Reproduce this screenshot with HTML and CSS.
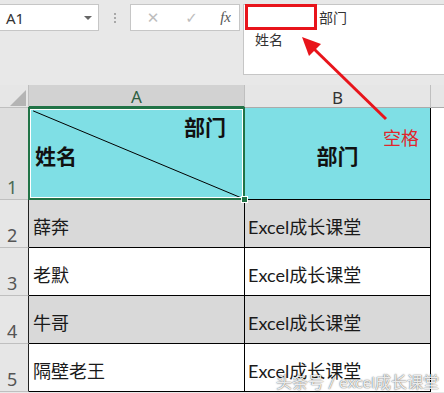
FILE: index.html
```html
<!DOCTYPE html>
<html lang="zh">
<head>
<meta charset="utf-8">
<title>Excel</title>
<link rel="stylesheet" href="styles.css">
</head>
<body>
<div class="toolbar">
  <div class="tools">
    <div class="namebox"><span>A1</span><span class="drop"></span></div>
    <div class="dots"><span></span><span></span><span></span></div>
    <div class="fxbox"><span class="btn">✕</span><span class="btn">✓</span><span class="fx">fx</span></div>
  </div>
  <div class="formula">
    <div class="fline"><span class="redbox"></span><span>部门</span></div>
    <div class="fline2">姓名</div>
  </div>
</div>
<div class="sheet">
  <div class="corner"><span class="tri"></span></div>
  <div class="colhead sel-col">A</div>
  <div class="colhead">B</div>
  <div class="colhead rest"></div>

  <div class="rowhead r1">1</div>
  <div class="cell a1 cyan">
    <svg class="diag" preserveAspectRatio="none" viewBox="0 0 100 100"><line x1="1" y1="1" x2="100" y2="100" stroke="#000" stroke-width="1" vector-effect="non-scaling-stroke"/></svg>
    <span class="a1-top">部门</span>
    <span class="a1-left">姓名</span>
    <span class="sel"></span><span class="handle"></span>
  </div>
  <div class="cell b1 cyan">部门</div>
  <div class="blank"></div>

  <div class="rowhead">2</div>
  <div class="cell a gray">薛奔</div>
  <div class="cell b gray">Excel成长课堂</div>
  <div class="blank"></div>

  <div class="rowhead">3</div>
  <div class="cell a">老默</div>
  <div class="cell b">Excel成长课堂</div>
  <div class="blank"></div>

  <div class="rowhead">4</div>
  <div class="cell a gray">牛哥</div>
  <div class="cell b gray">Excel成长课堂</div>
  <div class="blank"></div>

  <div class="rowhead">5</div>
  <div class="cell a">隔壁老王</div>
  <div class="cell b">Excel成长课堂</div>
  <div class="blank"></div>
</div>
<svg class="arrow" width="444" height="393" viewBox="0 0 444 393">
  <line x1="386" y1="119" x2="312" y2="47" stroke="#e8141b" stroke-width="3"/>
  <polygon points="302,37 309,56 321,44" fill="#e8141b"/>
</svg>
<div class="note">空格</div>
<div class="watermark">头条号 / excel成长课堂</div>
</body>
</html>
```

FILE: styles.css
```css
* { box-sizing: border-box; }
html, body { margin: 0; padding: 0; }
body {
  width: 444px;
  height: 393px;
  overflow: hidden;
  position: relative;
  background: #e8e8e8;
  font-family: "Lato", "Noto Sans CJK SC", sans-serif;
  color: #1a1a1a;
}
.toolbar {
  height: 85px;
  display: flex;
  align-items: flex-start;
}
.tools {
  width: 243px;
  display: flex;
  align-items: center;
  padding-top: 4px;
}
.namebox {
  width: 99px;
  height: 27px;
  background: #fff;
  border: 1px solid #c6c6c6;
  border-left: none;
  display: flex;
  align-items: center;
  justify-content: space-between;
  padding: 0 6px 0 6px;
  font-size: 15px;
  color: #333;
  font-family: "Noto Sans", sans-serif;
}
.drop {
  width: 0; height: 0;
  border-left: 4px solid transparent;
  border-right: 4px solid transparent;
  border-top: 4px solid #666;
}
.dots {
  width: 31px;
  display: flex;
  flex-direction: column;
  align-items: center;
  gap: 2px;
}
.dots span { width: 2px; height: 2px; background: #a8a8a8; }
.fxbox {
  width: 110px;
  height: 27px;
  background: #fff;
  border: 1px solid #c6c6c6;
  display: flex;
  align-items: center;
  padding: 0 8px 0 12px;
  justify-content: space-between;
}
.btn { color: #bdbdbd; font-size: 15px; width: 20px; text-align: center; font-family: "DejaVu Sans", sans-serif; }
.fx { font-family: "Liberation Serif", serif; font-style: italic; font-size: 15px; color: #555; }
.formula {
  flex: 1;
  margin-top: 4px;
  height: 71px;
  background: #fff;
  border: 1px solid #c6c6c6;
  border-right: none;
  font-size: 14px;
  color: #333;
}
.fline { display: flex; align-items: center; margin-top: -1px; gap: 2px; }
.redbox {
  width: 72px;
  height: 26px;
  border: 3px solid #e8141b;
  margin-left: 1px;
}
.fline2 { padding-left: 11px; margin-top: 1px; line-height: 18px; }
.sheet {
  display: grid;
  grid-template-columns: 29px 216px 186px 1fr;
  grid-template-rows: 23px 92px repeat(4, 48px);
}
.corner {
  background: #e6e6e6;
  border-right: 1px solid #bfbfbf;
  border-bottom: 1px solid #bfbfbf;
  display: flex;
  align-items: flex-end;
  justify-content: flex-end;
  padding: 0 2px 1px 0;
}
.tri {
  width: 16px; height: 16px;
  background: #b4b4b4;
  clip-path: polygon(100% 0, 100% 100%, 0 100%);
}
.colhead {
  background: #e6e6e6;
  border-right: 1px solid #bfbfbf;
  border-bottom: 1px solid #ababab;
  display: flex;
  align-items: center;
  justify-content: center;
  font-family: "Noto Sans", sans-serif;
  font-size: 17px;
  color: #333;
  padding-top: 2px;
}
.colhead.sel-col {
  background: #d2d2d2;
  border-bottom: 2px solid #217346;
  color: #2e5f41;
}
.colhead.rest { border-right: none; }
.rowhead {
  background: #e6e6e6;
  border-right: 1px solid #222;
  border-bottom: 1px solid #bfbfbf;
  display: flex;
  align-items: flex-end;
  padding: 0 0 1px 7px;
  font-family: "Noto Sans", sans-serif;
  font-size: 18px;
  line-height: 1.1;
  color: #555;
}
.rowhead.r1 { background: #dedede; color: #4a6a55; }
.cell {
  border-right: 1px solid #000;
  border-bottom: 1px solid #000;
  background: #fff;
  font-size: 18px;
  display: flex;
  align-items: center;
  padding-top: 4px;
}
.cell.gray { background: #d9d9d9; }
.cell.cyan { background: #7fdfe5; }
.cell.a { padding-left: 4px; }
.cell.b { padding-left: 3px; }
.blank { background: #fff; }
.a1 {
  position: relative;
  flex-direction: column;
  align-items: stretch;
  padding: 8px 18px 0 6px;
}
.diag {
  position: absolute;
  left: 2px; top: 2px;
  width: calc(100% - 2px);
  height: calc(100% - 2px);
}
.a1-top, .a1-left {
  position: relative;
  font-size: 21px;
  font-weight: bold;
  line-height: 1;
  color: #111;
}
.a1-top { align-self: flex-end; }
.a1-left { align-self: flex-start; margin-top: 8px; }
.sel {
  position: absolute;
  top: -1px; left: -1px; right: -1px; bottom: -1px;
  border: 2px solid #217346;
  box-shadow: inset 0 0 0 1px #fff;
}
.handle {
  position: absolute;
  right: -4px; bottom: -4px;
  width: 7px; height: 7px;
  background: #217346;
  border: 1px solid #fff;
  z-index: 2;
}
.b1 {
  justify-content: center;
  font-size: 21px;
  font-weight: bold;
  color: #111;
  padding-top: 3px;
}
.arrow { position: absolute; left: 0; top: 0; }
.note {
  position: absolute;
  left: 383px;
  top: 129px;
  font-size: 18px;
  color: #e0262c;
  line-height: 1;
}
.watermark {
  position: absolute;
  right: 5px;
  bottom: 3px;
  font-size: 16px;
  line-height: 1;
  color: rgba(255,255,255,0.9);
  text-shadow: 0 0 1px rgba(0,0,0,0.6), 0 0 2px rgba(0,0,0,0.35);
}
```
